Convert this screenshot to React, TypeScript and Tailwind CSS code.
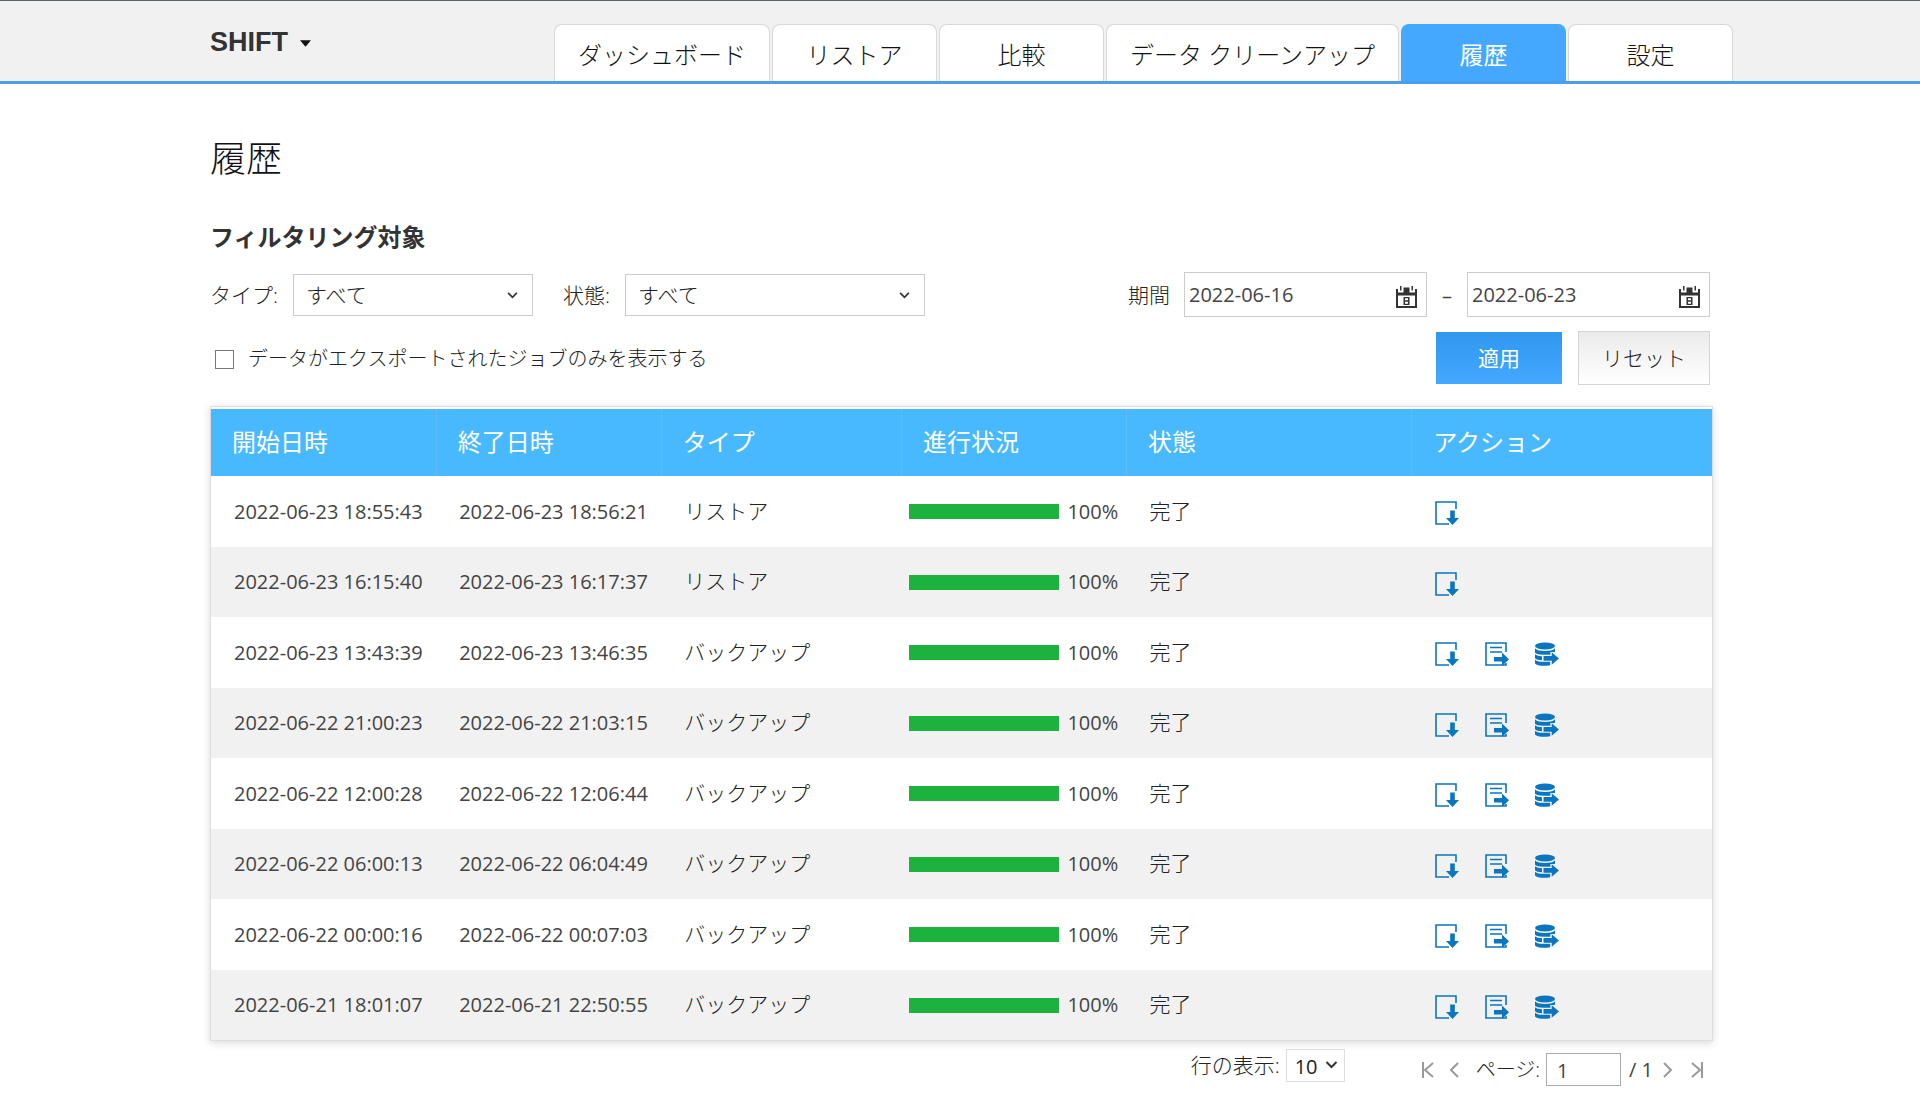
import { useState } from "react";
import type { ReactNode } from "react";
import clsx from "clsx";

type JobType = "リストア" | "バックアップ";

interface Job {
  start: string;
  end: string;
  type: JobType;
  progress: number;
  status: string;
}

const TABS = ["ダッシュボード", "リストア", "比較", "データ クリーンアップ", "履歴", "設定"];

const COLUMNS = [
  { label: "開始日時", width: "w-[15%]" },
  { label: "終了日時", width: "w-[15%]" },
  { label: "タイプ", width: "w-[16%]" },
  { label: "進行状況", width: "w-[15%]" },
  { label: "状態", width: "w-[19%]" },
  { label: "アクション", width: "w-[20%]" },
];

const JOBS: Job[] = [
  { start: "2022-06-23 18:55:43", end: "2022-06-23 18:56:21", type: "リストア", progress: 100, status: "完了" },
  { start: "2022-06-23 16:15:40", end: "2022-06-23 16:17:37", type: "リストア", progress: 100, status: "完了" },
  { start: "2022-06-23 13:43:39", end: "2022-06-23 13:46:35", type: "バックアップ", progress: 100, status: "完了" },
  { start: "2022-06-22 21:00:23", end: "2022-06-22 21:03:15", type: "バックアップ", progress: 100, status: "完了" },
  { start: "2022-06-22 12:00:28", end: "2022-06-22 12:06:44", type: "バックアップ", progress: 100, status: "完了" },
  { start: "2022-06-22 06:00:13", end: "2022-06-22 06:04:49", type: "バックアップ", progress: 100, status: "完了" },
  { start: "2022-06-22 00:00:16", end: "2022-06-22 00:07:03", type: "バックアップ", progress: 100, status: "完了" },
  { start: "2022-06-21 18:01:07", end: "2022-06-21 22:50:55", type: "バックアップ", progress: 100, status: "完了" },
];

export default function App() {
  return (
    <div className="min-h-screen bg-white font-['Open_Sans','Noto_Sans_CJK_JP',sans-serif] text-xl text-[#444]">
      <Header />
      <main className="mx-auto w-full max-w-[1500px] pt-[51px] pb-6">
        <h1 className="text-4xl leading-[48px] font-light text-[#111]">履歴</h1>
        <Filters />
        <JobTable />
        <Pagination />
      </main>
    </div>
  );
}

function Header() {
  const [active, setActive] = useState("履歴");

  return (
    <header className="h-[84px] border-t border-b-3 border-t-[#5b6370] border-b-[#4a9fe8] bg-[#f1f1f1]">
      <div className="mx-auto flex h-full w-full max-w-[1500px] justify-between">
        <button
          type="button"
          className="flex h-full items-center gap-3 pt-1 font-['Liberation_Sans',Arial,sans-serif] text-[27px] font-bold text-[#333]"
        >
          SHIFT
          <svg width="11" height="7" viewBox="0 0 12 7" fill="#111" aria-hidden="true">
            <path d="M0 0h12L6 7z" />
          </svg>
        </button>

        <nav className="-mr-[23px] flex items-end gap-0.5">
          {TABS.map((tab) => (
            <a
              key={tab}
              href="#"
              onClick={() => setActive(tab)}
              className={clsx(
                "flex h-[57px] min-w-[165px] items-center justify-center rounded-t-lg border border-b-0 px-[23px] pt-1 text-2xl whitespace-nowrap",
                tab === active
                  ? "border-[#44a8ff] bg-[#44a8ff] text-white"
                  : "border-[#d8d8d8] bg-white font-light text-[#111]",
              )}
            >
              {tab}
            </a>
          ))}
        </nav>
      </div>
    </header>
  );
}

// ── Filters ────────────────────────────────────────────────────────────────

function Filters() {
  return (
    <form onSubmit={(e) => e.preventDefault()}>
      <h2 className="mt-[38px] text-2xl leading-8 font-bold text-[#333]">フィルタリング対象</h2>

      <div className="mt-[19px] flex items-center justify-between">
        <div className="flex items-center gap-[30px]">
          <FilterSelect id="type" label="タイプ:" width="w-60" />
          <FilterSelect id="status" label="状態:" width="w-[300px]" />
        </div>
        <div className="flex items-center">
          <label htmlFor="from" className="mr-3.5 pt-0.5 text-[21px] font-light text-[#222]">
            期間
          </label>
          <DateField id="from" label="開始日" value="2022-06-16" />
          <span className="w-10 pt-0.5 text-center">–</span>
          <DateField id="to" label="終了日" value="2022-06-23" />
        </div>
      </div>

      <div className="mt-3.5 flex items-center justify-between">
        <label className="flex items-center gap-3.5 pt-0.5 pl-[5px] font-light text-[#222]">
          <input type="checkbox" className="size-[19px] appearance-none border border-[#777] bg-white checked:bg-[#44a8ff]" />
          データがエクスポートされたジョブのみを表示する
        </label>
        <div className="flex items-center gap-4">
          <button
            type="submit"
            className="h-[52px] w-[126px] bg-linear-to-b from-[#2e98ee] to-[#44a8ff] pt-0.5 text-[21px] text-white"
          >
            適用
          </button>
          <button
            type="reset"
            className="h-[54px] w-[132px] border border-[#d4d4d4] bg-linear-to-b from-[#ebebeb] to-white pt-0.5 text-[21px] font-light text-[#222]"
          >
            リセット
          </button>
        </div>
      </div>
    </form>
  );
}

function FilterSelect({ id, label, width }: { id: string; label: string; width: string }) {
  return (
    <div className="flex items-center gap-[15px]">
      <label htmlFor={id} className="pt-0.5 text-[21px] font-light text-[#222]">
        {label}
      </label>
      <div className={clsx("relative", width)}>
        <select
          id={id}
          className="h-[42px] w-full appearance-none border border-[#ccc] bg-white pt-0.5 pl-3 text-[21px] font-light text-[#222]"
        >
          <option>すべて</option>
        </select>
        <ChevronDown className="pointer-events-none absolute top-[18px] right-[15px] h-[7px] w-[11px]" />
      </div>
    </div>
  );
}

function DateField({ id, label, value }: { id: string; label: string; value: string }) {
  return (
    <div className="relative">
      <input
        id={id}
        type="text"
        aria-label={label}
        defaultValue={value}
        className="h-[45px] w-[243px] border border-[#ccc] bg-white pr-10 pl-1"
      />
      <button type="button" aria-label="カレンダー" className="absolute top-3.5 right-2.5">
        <CalendarIcon />
      </button>
    </div>
  );
}

// ── Table ──────────────────────────────────────────────────────────────────

function JobTable() {
  return (
    <div className="mt-[21px] -mr-[3px] border border-[#ddd] pt-0.5 shadow-[0_2px_8px_rgba(0,0,0,0.15)]">
      <table className="w-full table-fixed border-collapse text-left">
        <thead>
          <tr className="h-[67px] bg-[#49b9ff] text-2xl text-white">
            {COLUMNS.map((column) => (
              <th
                key={column.label}
                scope="col"
                className={clsx("border-r border-[#5fbcf8] pb-0.5 pl-[21px] font-normal last:border-r-0", column.width)}
              >
                {column.label}
              </th>
            ))}
          </tr>
        </thead>
        <tbody>
          {JOBS.map((job) => (
            <tr key={job.start} className="odd:h-[71px] even:h-[70px] even:bg-[#f1f1f1]">
              <td className="pl-[23px] whitespace-nowrap">{job.start}</td>
              <td className="pl-[23px] whitespace-nowrap">{job.end}</td>
              <td className="pl-[23px] text-[21px] font-light text-[#222]">{job.type}</td>
              <td className="pl-2">
                <div className="flex items-center gap-2">
                  <div className="h-[15px] w-[150px]">
                    <div className="h-full bg-[#1db13e]" style={{ width: `${job.progress}%` }} />
                  </div>
                  {job.progress}%
                </div>
              </td>
              <td className="pl-[23px] text-[21px] font-light text-[#222]">{job.status}</td>
              <td className="pt-[3px] pl-[23px]">
                <JobActions type={job.type} />
              </td>
            </tr>
          ))}
        </tbody>
      </table>
    </div>
  );
}

function JobActions({ type }: { type: JobType }) {
  return (
    <div className="flex items-center gap-[26px]">
      <IconButton label="ダウンロード">
        <path d="M21 8V1H1v22h13" fill="none" stroke="currentColor" strokeWidth="1.6" />
        <path d="M15.2 9.5h4.600v7.500H24l-6.500 7-6.500-7h4.200z" />
      </IconButton>
      {type === "バックアップ" && (
        <>
          <IconButton label="レポートのエクスポート">
            <path d="M21 10V1H1v22h20v-2" fill="none" stroke="currentColor" strokeWidth="1.6" />
            <path d="M5 5.500h12M5 10h12" fill="none" stroke="currentColor" strokeWidth="1.6" />
            <path d="M9 15h8v-4.500l7 6.700-7 6.800v-4.500H9z" />
          </IconButton>
          <IconButton label="データのエクスポート">
            <ellipse cx="10" cy="4" rx="10" ry="3.400" />
            <path d="M0 6.300c2 2.300 6 2.700 10 2.700s8-.4 10-2.700v3.600h-4.600v2.900H8C4 12.800 1 12 0 10.800z" />
            <path d="M0 12.200c1.500 1.400 4 1.800 7 2v4C3.500 18 1 17.400 0 16.200z" />
            <path d="M0 17.700c2 1.700 5 2.100 8 2.100h7.200v3.400C9 24.500 2 23.900 0 21.400z" />
            <path d="M8.500 14h8.200v-3.800L24 16.500l-7.300 6.200v-4H8.500z" />
          </IconButton>
        </>
      )}
    </div>
  );
}

function IconButton({ label, children }: { label: string; children: ReactNode }) {
  return (
    <button type="button" aria-label={label} className="text-[#0b76bf]">
      <svg width="24" height="24" viewBox="0 0 24 24" fill="currentColor" aria-hidden="true">
        {children}
      </svg>
    </button>
  );
}

// ── Pagination ─────────────────────────────────────────────────────────────

function Pagination() {
  return (
    <div className="mt-2 flex items-start justify-end pr-[7px]">
      <label htmlFor="rows" className="mr-1.5 text-[21px] leading-8 font-light text-[#222]">
        行の表示:
      </label>
      <div className="relative">
        <select
          id="rows"
          className="h-[33px] w-[59px] appearance-none border border-[#ddd] bg-white pt-0.5 pl-2 leading-none text-[#222]"
        >
          <option>10</option>
        </select>
        <ChevronDown className="pointer-events-none absolute top-3 right-[7px] h-2 w-[13px]" />
      </div>

      <div className="mt-1 ml-[77px] flex h-[33px] items-center">
        <PageButton label="最初のページ" path="M1 0v16M11 1L3 8l8 7" />
        <PageButton label="前のページ" path="M10 1L3 8l7 7" className="ml-3.5" />
        <label htmlFor="page" className="ml-4 font-light text-[#222]">
          ページ:
        </label>
        <input
          id="page"
          type="text"
          defaultValue="1"
          className="ml-1.5 h-[33px] w-[75px] border border-[#aaa] bg-white pt-0.5 pl-2.5"
        />
        <span className="mx-2">/ 1</span>
        <PageButton label="次のページ" path="M3 1l7 7-7 7" />
        <PageButton label="最後のページ" path="M1 1l8 7-8 7M11 0v16" className="ml-[18px]" />
      </div>
    </div>
  );
}

function PageButton({ label, path, className }: { label: string; path: string; className?: string }) {
  return (
    <button type="button" aria-label={label} className={className}>
      <svg width="12" height="16" viewBox="0 0 12 16" fill="none" stroke="#999" strokeWidth="2" aria-hidden="true">
        <path d={path} />
      </svg>
    </button>
  );
}

// ── Icons ──────────────────────────────────────────────────────────────────

function ChevronDown({ className }: { className?: string }) {
  return (
    <svg viewBox="0 0 12 8" fill="none" stroke="#333" strokeWidth="2" className={className} aria-hidden="true">
      <path d="M1 1l5 5 5-5" />
    </svg>
  );
}

function CalendarIcon() {
  return (
    <svg width="21" height="22" viewBox="0 0 21 22" fill="#333" aria-hidden="true">
      <path d="M0 3h2v3.500h17V3h2v19H0zM2 9.500V20h17V9.500z" fillRule="evenodd" />
      <path d="M4 0h1.500v4.500H4zM15.500 0H17v4.500h-1.500zM7.500 1.500h6V7h-6z" />
      <path d="M7.500 11h6v8h-6zM9 12.300v1.900h3v-1.900zm0 3.400v2h3v-2z" fillRule="evenodd" />
    </svg>
  );
}
